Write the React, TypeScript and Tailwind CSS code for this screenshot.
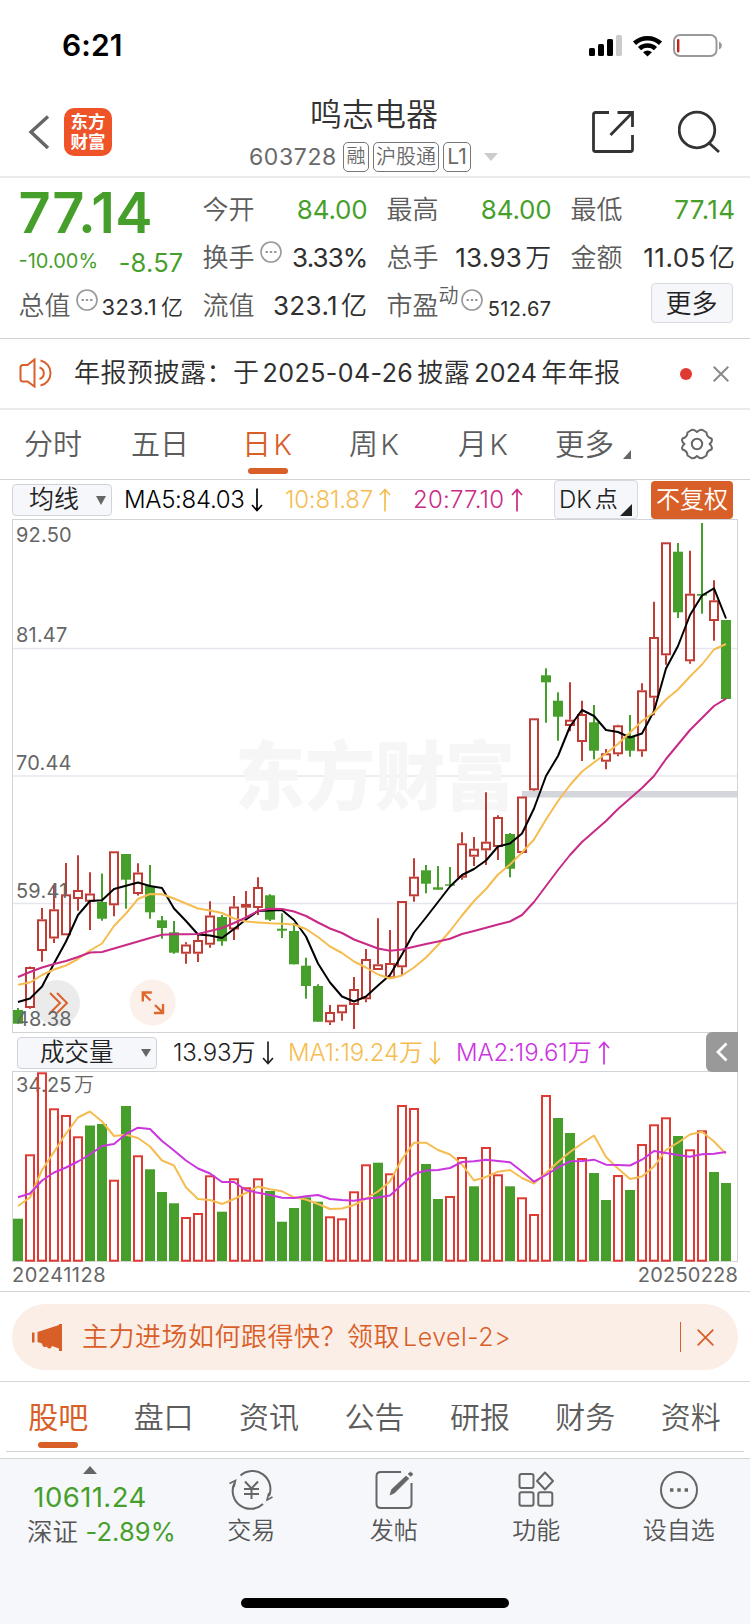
import type { ReactNode } from "react";
import clsx from "clsx";

const GREEN = "#479f2b";
const RED = "#c23c36";
const VOL_RED = "#e03a32";
const LINE = "#d2d3d7";

/** [up, high, bodyTop, bodyBottom, low, volumeUp, volumeTop] in page pixels, one entry per trading day. */
type Day = [number, number, number, number, number, number, number];

const DAYS: Day[] = [
  [0, 1008, 1010, 1023.7, 1023.7, 0, 1218.7],
  [1, 966.5, 967, 1008, 1008.7, 1, 1154.3],
  [1, 908, 919.3, 951, 961.7, 1, 1072.3],
  [1, 886, 909.3, 938.5, 943, 1, 1108.3],
  [1, 863, 894.3, 935.3, 935.3, 1, 1115],
  [1, 855.3, 890, 899, 910.7, 1, 1136.3],
  [1, 872.3, 893.5, 901.7, 930, 0, 1125.5],
  [0, 873.5, 902, 918.7, 920.7, 0, 1124],
  [1, 851.3, 851.3, 905.3, 916.3, 1, 1179.7],
  [0, 854, 854, 879.7, 908.7, 0, 1106],
  [1, 863.3, 872.5, 894, 895.5, 1, 1155.3],
  [0, 865, 886, 912.3, 918.7, 0, 1169.3],
  [0, 916, 920.3, 928, 938.7, 0, 1192],
  [0, 921, 932.3, 952.7, 953.7, 0, 1203.3],
  [1, 942.3, 944.5, 953.7, 963.7, 1, 1217],
  [1, 934, 940, 953.7, 962, 1, 1213],
  [1, 901.3, 915.5, 944.7, 947.7, 1, 1175.3],
  [0, 915, 917, 941.3, 945.7, 0, 1211.7],
  [1, 896, 906.5, 929.5, 940, 1, 1178.3],
  [1, 891, 904, 907.7, 918, 1, 1187.3],
  [1, 877.3, 887, 908, 915, 1, 1178.3],
  [0, 894.3, 895.3, 919.7, 921, 0, 1191],
  [0, 913.3, 928.7, 930.7, 938, 0, 1221.7],
  [0, 923, 931, 964.3, 964.3, 0, 1208],
  [0, 957.7, 965.7, 986, 998.7, 0, 1197.3],
  [0, 984.3, 986, 1021.7, 1021.7, 0, 1201.7],
  [1, 1005, 1012, 1022.3, 1025, 1, 1216.3],
  [1, 1004.7, 1004.7, 1013.3, 1020.7, 1, 1218.3],
  [1, 977, 989, 1005, 1029, 1, 1191.3],
  [1, 949, 959, 999.3, 1002.3, 1, 1164.3],
  [1, 918.3, 964.3, 970, 970, 0, 1162.7],
  [1, 930, 963, 978.3, 978.3, 1, 1173.3],
  [1, 901, 901, 967.3, 975, 1, 1105],
  [1, 858.3, 876.7, 896.3, 901.7, 1, 1108],
  [0, 865, 870.3, 883.7, 893.3, 0, 1164],
  [0, 866, 887.3, 889.7, 889.7, 0, 1199],
  [0, 867, 884.3, 885.7, 886.7, 1, 1196],
  [1, 832.3, 843.3, 877.7, 879.7, 1, 1157],
  [1, 837, 848.7, 856.7, 866, 0, 1186.3],
  [1, 792.3, 841.7, 850.3, 865, 1, 1147],
  [1, 815.3, 817, 847, 860, 1, 1174.3],
  [0, 833, 834, 868.7, 877.3, 0, 1186.3],
  [1, 796.5, 796.5, 853, 854, 1, 1197.3],
  [1, 718.3, 718.3, 790.3, 791, 1, 1214],
  [0, 668.3, 675.3, 682.3, 722.7, 1, 1095],
  [0, 692.3, 700.7, 716.7, 740.7, 0, 1118],
  [1, 682.3, 719.7, 726, 731.3, 0, 1133],
  [1, 700.7, 714, 742, 761, 1, 1158],
  [0, 705, 722.3, 750.7, 759.3, 0, 1173],
  [1, 749, 753.3, 761.7, 769.3, 0, 1200],
  [1, 724.7, 725.3, 754.3, 756.3, 1, 1175],
  [0, 715, 736.7, 750.7, 756.7, 0, 1190],
  [1, 683.3, 690.3, 751.3, 756.7, 1, 1144],
  [1, 601.7, 637, 697.7, 715.3, 1, 1124.3],
  [1, 542.3, 542.3, 655.3, 664.7, 1, 1117.3],
  [0, 543, 551.7, 612.3, 618, 0, 1136],
  [1, 550.7, 593.7, 661.3, 663.7, 1, 1149.3],
  [0, 523, 594, 595.7, 613.7, 1, 1130.3],
  [1, 580.3, 600.3, 621, 640.7, 0, 1172],
  [0, 620, 620, 699, 699, 0, 1183],
];

const MA5 = [
  1002, 998.5, 986.5, 963.5, 941.5, 915, 901, 900.3, 889, 885.7, 882.5, 886, 888, 908.5, 921, 934.5, 935.5, 938,
  929, 919.5, 911, 910.5, 910, 920, 936.5, 963.5, 982.5, 996.5, 1001.5, 996.5, 985.5, 975, 954.5, 932.5, 917.5,
  902, 886.5, 875, 869, 860.5, 846.5, 843.5, 833.5, 808.5, 776, 756, 726.5, 710, 716, 730, 732, 737.5, 733.5, 711,
  668.5, 646, 615, 595.5, 588.3, 618.5,
];
const MA10 = [
  984.7, 982.5, 975, 969.5, 965.5, 959, 950.5, 943.5, 926, 913.5, 899, 894, 894.3, 898.5, 903.5, 908.5, 910.5, 913,
  918.5, 921.5, 922.5, 923.3, 923.7, 924.5, 929, 937, 946.5, 953, 961.5, 967.5, 974.5, 978.5, 975.5, 967.5, 957.5,
  945, 931, 915.5, 901, 889, 874.5, 864.5, 852.5, 839.5, 819.5, 801, 785, 771.5, 762.5, 753.5, 744, 732.5, 721,
  712.5, 699.5, 689.5, 676.5, 664.5, 649.5, 644,
];
const MA20 = [
  977, 972, 967.5, 964, 961, 957, 952.5, 952, 948.5, 945, 941.5, 938, 934.7, 934.3, 934.3, 934, 931, 928, 923, 917.5,
  911, 908.7, 909, 911.5, 916, 922.5, 928.5, 933, 939.5, 944, 948.5, 950.7, 949.5, 946.7, 944, 941.5, 938.7, 934,
  931, 927.8, 924.5, 921.5, 915, 902, 886, 870, 855, 842, 831.5, 821, 809, 798.5, 788, 776, 759, 744.5, 730, 718,
  706, 698.7,
];
const VOL_MA1 = [
  1206, 1197.5, 1170, 1152, 1133.5, 1117.5, 1111.5, 1121.5, 1136, 1134.7, 1138, 1146.5, 1160.5, 1165.5, 1187.5, 1199,
  1200, 1204, 1199, 1193, 1186.5, 1189.3, 1191.3, 1197.3, 1199.5, 1204, 1209, 1208.5, 1205, 1198.5, 1191.5, 1181.5,
  1159, 1142.7, 1142.7, 1150, 1154.5, 1164.5, 1180.5, 1177, 1171.7, 1170, 1178, 1183.5, 1173, 1162, 1152, 1143.5,
  1135.5, 1157, 1168.5, 1179, 1176.5, 1166.5, 1150, 1142.5, 1134.5, 1131.7, 1141.5, 1153.7,
];
const VOL_MA2 = [
  1197.3, 1193.5, 1180.5, 1172.5, 1167.5, 1161.5, 1154.5, 1146, 1144, 1134, 1127.7, 1129, 1141, 1150.5, 1160.5,
  1168.5, 1173.5, 1182, 1182, 1190.3, 1192.7, 1195, 1197.7, 1198, 1196.3, 1195, 1199, 1200, 1200.7, 1198.7, 1197.5,
  1195.5, 1184.5, 1174, 1170.5, 1170, 1168, 1162, 1161.3, 1159.7, 1161, 1162.3, 1171.5, 1181.7, 1175, 1167.5, 1161.3,
  1161, 1159.7, 1164.7, 1165, 1165.5, 1159.7, 1151, 1153, 1155, 1156.7, 1154.3, 1153.7, 1152,
];

const xAt = (i: number) => 18 + i * 12;
const toPoints = (ys: number[]) => ys.map((y, i) => `${xAt(i)},${y}`).join(" ");

function Trend({ ys, color }: { ys: number[]; color: string }) {
  return <polyline points={toPoints(ys)} fill="none" stroke={color} strokeWidth="2" strokeLinejoin="round" />;
}

function PriceChart() {
  return (
    <svg width="750" height="514" viewBox="0 519 750 514" className="block shrink-0">
      <path d="M13 648.5H738M13 776H738M13 903.5H738" stroke="#e6e6ee" strokeWidth="1.4" />
      <text x="235" y="757" fontSize="70" fontWeight="900" fill="#f6f6f6" transform="translate(0 -6) scale(1 1.07)">
        东方财富
      </text>
      <rect x="522" y="791" width="216" height="6.5" fill="#d4d6db" />
      <rect x="12.5" y="519.5" width="725" height="513" fill="none" stroke={LINE} />
      <circle cx="57" cy="1003" r="23" fill="#ebebeb" />
      <circle cx="152.7" cy="1002.6" r="23" fill="#fcf0ea" />
      {DAYS.map(([up, high, top, bottom, low], i) => {
        const x = xAt(i);
        return up ? (
          <g key={i} stroke={RED} strokeWidth="2" fill="none">
            <path d={`M${x} ${high}V${top}M${x} ${bottom}V${low}`} />
            <rect x={x - 4} y={top + 1} width="8" height={Math.max(bottom - top - 2, 1)} />
          </g>
        ) : (
          <g key={i} fill={GREEN}>
            <rect x={x - 1} y={high} width="2" height={low - high} />
            <rect x={x - 5} y={top} width="10" height={bottom - top} />
          </g>
        );
      })}
      <Trend ys={MA5} color="#000" />
      <Trend ys={MA10} color="#f5bd51" />
      <Trend ys={MA20} color="#c92a86" />
      <path d="M50 993l10 10-10 10M57 993l10 10-10 10" fill="none" stroke="#d9622b" strokeWidth="2" />
      <g fill="none" stroke="#e0682f" strokeWidth="2.4">
        <path d="M142.800 1001.500V992.500H151.800M143 993L150.500 1000.500" />
        <path d="M163 1004V1013H154M162.800 1012.700L155 1005" />
      </g>
      <g fontSize="20" fill="#666" letterSpacing="0.2">
        <text x="16" y="542">92.50</text>
        <text x="16" y="642">81.47</text>
        <text x="16" y="770">70.44</text>
        <text x="16" y="898">59.41</text>
        <text x="16" y="1026">48.38</text>
      </g>
    </svg>
  );
}

function VolumeChart() {
  return (
    <svg width="750" height="191" viewBox="0 1071 750 191" className="block shrink-0">
      <rect x="12.5" y="1071.5" width="725" height="190" fill="none" stroke={LINE} />
      <g fontSize="20" fill="#666" letterSpacing="0.2">
        <text x="16" y="1092">34.25</text>
        <text x="74" y="1092" className="font-[350]">
          万
        </text>
      </g>
      {DAYS.map(([, , , , , up, top], i) =>
        up ? (
          <rect key={i} x={xAt(i) - 4} y={top + 1} width="8" height={1259.7 - top} fill="none" stroke={VOL_RED} strokeWidth="2" />
        ) : (
          <rect key={i} x={xAt(i) - 5} y={top} width="10" height={1261 - top} fill={GREEN} />
        ),
      )}
      <Trend ys={VOL_MA1} color="#f5bd51" />
      <Trend ys={VOL_MA2} color="#cb35df" />
    </svg>
  );
}

function Arrow({ down, className }: { down?: boolean; className?: string }) {
  return (
    <svg width="12" height="24" viewBox="0 0 12 24" className={clsx("shrink-0", className)} fill="none" stroke="currentColor" strokeWidth="1.7">
      <path d={down ? "M6 .5V22M1 17L6 22.500L11 17" : "M6 23.500V2M1 7L6 1.500L11 7"} />
    </svg>
  );
}

function More({ className }: { className?: string }) {
  return (
    <svg width="22" height="22" viewBox="0 0 22 22" className={clsx("shrink-0", className)}>
      <circle cx="11" cy="11" r="10" fill="none" stroke="#999" strokeWidth="1.6" />
      <path d="M5.500 11h2.400M9.800 11h2.400M14.100 11h2.400" stroke="#999" strokeWidth="2.200" />
    </svg>
  );
}

interface CellProps {
  label: string;
  value: string;
  unit?: string;
  valueClass?: string;
  children?: ReactNode;
}

function Cell({ label, value, unit, valueClass = "tracking-[0.3px] text-[#2f2f2f]", children }: CellProps) {
  return (
    <div className="flex h-12 items-center justify-between whitespace-nowrap">
      <span className="flex items-center text-[26px] font-[350] text-[#5c5c5c]">
        {label}
        {children}
      </span>
      <span className={clsx("flex text-[26px]", valueClass)}>
        {value}
        {unit && <span className="ml-[3px] font-[350]">{unit}</span>}
      </span>
    </div>
  );
}

function StatusBar() {
  return (
    <div className="flex h-[88px] shrink-0 items-center justify-between pr-[28px] pl-[62px]">
      <span className="mt-[2px] text-[30px] font-semibold tracking-[0.1px] text-black">6:21</span>
      <svg width="134" height="26" viewBox="588 31 134 26">
        <rect x="589" y="48" width="6" height="8" rx="1.5" />
        <rect x="598" y="44" width="6" height="12" rx="1.5" />
        <rect x="607" y="39" width="6" height="17" rx="1.5" />
        <rect x="616" y="35" width="6" height="21" rx="1.5" fill="#ccc" />
        <g fill="none" stroke="#000" strokeWidth="4.600">
          <path d="M634.500 43.300a19.300 19.300 0 0 1 26 0" />
          <path d="M639.500 48.600a12 12 0 0 1 16 0" />
        </g>
        <path d="M643 52.200a7 7 0 0 1 9 0L647.500 56.500Z" />
        <rect x="674" y="35" width="42.500" height="21" rx="6" fill="none" stroke="#999" strokeWidth="2" />
        <rect x="677" y="39" width="2.400" height="13.500" rx="1" fill="#c8201f" />
        <path d="M719 41.500q3 1.500 3 4t-3 4z" fill="#999" />
      </svg>
    </div>
  );
}

function NavBar() {
  return (
    <header className="flex h-[90px] shrink-0 items-start border-b-2 border-[#ebebeb]">
      <svg width="22" height="36" viewBox="0 0 22 36" className="mt-[26px] ml-[28px]" fill="none" stroke="#666" strokeWidth="3.400">
        <path d="M20 2.500L3 18L20 34" />
      </svg>
      <div className="mt-[20px] ml-[14px] flex size-12 flex-col items-center justify-center rounded-[10px] bg-[#ee5427] text-[17.5px] leading-[20px] font-bold text-white">
        <span>东方</span>
        <span>财富</span>
      </div>
      <div className="ml-[137px] flex w-[251px] flex-col">
        <h1 className="mt-[9px] ml-[61px] text-[32px] leading-[36px] font-[350] text-[#333]">鸣志电器</h1>
        <div className="mt-[9px] flex h-[30px] items-center text-[#6a6a6a]">
          <span className="w-[94px] text-[23px] tracking-[0.6px]">603728</span>
          <span className="flex h-[30px] w-[26px] items-center justify-center rounded-[5px] border border-[#777] text-[19px] font-[350]">融</span>
          <span className="ml-[4px] flex h-[30px] w-[66px] items-center justify-center rounded-[5px] border border-[#777] text-[20px] font-[350]">
            沪股通
          </span>
          <span className="ml-[4px] flex h-[30px] w-[28px] items-center justify-center rounded-[5px] border border-[#777] text-[21px]">
            L1
          </span>
          <svg width="14" height="8" viewBox="0 0 14 8" className="ml-[13px] shrink-0">
            <path d="M0 0H14L7 8Z" fill="#ccc" />
          </svg>
        </div>
      </div>
      <svg width="44" height="44" viewBox="0 0 44 44" className="mt-[22px] ml-[91px]" fill="none" stroke="#333" strokeWidth="2.800">
        <path d="M18 2.500H4.500Q2.500 2.500 2.500 4.500V39.500Q2.500 41.500 4.500 41.500H39.500Q41.500 41.500 41.500 39.500V25M26.500 2.500H41.500V17M41 3L19.500 25" />
      </svg>
      <svg width="44" height="44" viewBox="0 0 44 44" className="mt-[22px] ml-[43px]" fill="none" stroke="#333" strokeWidth="2.800">
        <circle cx="19" cy="20" r="17.800" />
        <path d="M31 33L41 42" />
      </svg>
    </header>
  );
}

function Quote() {
  return (
    <section className="grid h-[161px] shrink-0 grid-cols-[165px_165px_165px_165px] gap-x-[19px] border-b border-[#d0d0d0] pt-[7px] pl-[18.5px]">
      <div>
        <div className="flex h-[54px] items-center pt-[2px] text-[56px] leading-none font-semibold tracking-[0.4px] text-[#479f2b]">77.14</div>
        <div className="flex h-[42px] items-center justify-between text-[#479f2b]">
          <span className="mt-px text-[20px]">-10.00%</span>
          <span className="mt-[7px] text-[25.5px] tracking-[0.2px]">-8.57</span>
        </div>
        <div className="flex h-12 items-center whitespace-nowrap">
          <span className="text-[26px] font-[350] text-[#5c5c5c]">总值</span>
          <More className="mb-[10px] ml-[5px]" />
          <span className="mt-[5px] ml-auto flex text-[22px] tracking-[0.4px] text-[#2f2f2f]">
            323.1<span className="ml-[4px] font-[350]">亿</span>
          </span>
        </div>
      </div>
      <div>
        <Cell label="今开" value="84.00" valueClass="tracking-[-0.2px] text-[#479f2b]" />
        <Cell label="换手" value="3.33%" valueClass="tracking-[-0.9px] text-[#2f2f2f]">
          <More className="mb-[10px] ml-[5px]" />
        </Cell>
        <Cell label="流值" value="323.1" unit="亿" valueClass="tracking-[0.4px] text-[#2f2f2f]" />
      </div>
      <div>
        <Cell label="最高" value="84.00" valueClass="tracking-[-0.2px] text-[#479f2b]" />
        <Cell label="总手" value="13.93" unit="万" />
        <div className="flex h-12 items-center whitespace-nowrap">
          <span className="text-[26px] font-[350] text-[#5c5c5c]">市盈</span>
          <span className="mb-[18px] text-[20px] font-[350] text-[#5c5c5c]">动</span>
          <More className="mb-[10px] ml-[2px]" />
          <span className="mt-[8px] ml-auto text-[20px] tracking-[0.4px] text-[#2f2f2f]">512.67</span>
        </div>
      </div>
      <div>
        <Cell label="最低" value="77.14" valueClass="tracking-[0.4px] text-[#479f2b]" />
        <Cell label="金额" value="11.05" unit="亿" valueClass="tracking-[0.5px] text-[#2f2f2f]" />
        <button className="mt-[2px] mr-[3px] ml-auto flex h-[40px] w-[82px] items-center justify-center rounded-[4px] border border-[#d8dade] bg-[#f6f7fa] text-[26px] font-[350] text-[#222]">
          更多
        </button>
      </div>
    </section>
  );
}

function Notice() {
  return (
    <section className="flex h-[71px] shrink-0 items-center border-b-2 border-[#ebebeb] pl-[19px]">
      <svg width="36" height="30" viewBox="0 0 36 30" className="mb-px" fill="none" stroke="#d9602a" strokeWidth="2">
        <path d="M15.500 1.500V28.500L8.500 23.500H4Q1.500 23.500 1.500 21V9.500Q1.500 7 4 7H8.500Z" />
        <path d="M20.500 9.500a6 6 0 0 1 0 11.500M21.500 2.500a12.800 12.800 0 0 1 0 25" />
      </svg>
      <span className="mb-px ml-[19px] flex w-[561px] items-baseline text-[26px] font-[350] tracking-[0.5px] whitespace-nowrap text-[#2f2f2f]">
        年报预披露：于
        <span className="ml-[3px] text-[25px] font-normal tracking-[0.45px]">2025-04-26</span>
        <span className="ml-[4px]">披露</span>
        <span className="ml-[4px] text-[25px] font-normal tracking-[0.2px]">2024</span>
        <span className="ml-[4px]">年年报</span>
      </span>
      <span className="ml-[45px] size-3 rounded-full bg-[#e03a32]" />
      <svg width="16" height="16" viewBox="0 0 16 16" className="ml-[21px]" stroke="#8a8a8a" strokeWidth="2">
        <path d="M.7.7L15.300 15.300M15.300.7L.7 15.300" />
      </svg>
    </section>
  );
}

function KTab({ unit, className }: { unit: string; className?: string }) {
  return (
    <span className={clsx("flex items-baseline", className)}>
      {unit}
      <span className="ml-[2.5px] text-[28.5px]">K</span>
    </span>
  );
}

function PeriodTabs() {
  return (
    <nav className="relative flex h-[70px] shrink-0 items-center border-b border-[#d2d3d7] pl-[24px] text-[29px] font-[350] whitespace-nowrap text-[#5c5c5c]">
      <span className="w-[107px]">分时</span>
      <span className="w-[111px]">五日</span>
      <KTab unit="日" className="w-[107px] text-[#d95f28]" />
      <KTab unit="周" className="w-[109px]" />
      <KTab unit="月" className="w-[97px]" />
      <span className="w-[68px] text-[29.5px]">更多</span>
      <svg width="8" height="9" viewBox="0 0 8 9" className="mt-[20px]">
        <path d="M8 0V9H0Z" fill="#666" />
      </svg>
      <svg width="34" height="32" viewBox="0 0 34 32" className="mb-[2px] ml-[49px]" fill="none" stroke="#666" strokeWidth="2">
        <path d="M11.500 2Q14 1 17 4Q20 1 22.500 2L26.500 4.500Q26.500 9 31.500 10.500Q33 13.500 29.500 16Q33 18.500 31.500 21.500Q26.500 23 26.500 27.500L22.500 30Q20 31 17 28Q14 31 11.500 30L7.500 27.500Q7.500 23 2.500 21.500Q1 18.500 4.500 16Q1 13.500 2.500 10.500Q7.500 9 7.500 4.500Z" strokeLinejoin="round" />
        <circle cx="17" cy="16" r="5.200" />
      </svg>
      <span className="absolute top-[58px] left-[248px] h-[6px] w-[40px] rounded-full bg-[#d95f28]" />
    </nav>
  );
}

function AverageBar() {
  return (
    <div className="flex h-[39px] shrink-0 items-center pl-3 text-[24px] font-[350] whitespace-nowrap">
      <span className="mt-px flex h-[32px] w-[100px] items-center rounded-[4px] border border-[#d0d3dc] bg-[#f6f7fa] pl-4 text-[25px] text-[#222]">
        均线
        <svg width="10" height="9" viewBox="0 0 10 9" className="mr-[5px] ml-auto">
          <path d="M0 0H10L5 9Z" fill="#666" />
        </svg>
      </span>
      <span className="mt-px ml-[12px] w-[127px] tracking-[-0.3px] text-black">MA5:84.03</span>
      <Arrow down />
      <span className="mt-px ml-[22px] w-[94px] tracking-[-0.2px] text-[#f5bd51]">10:81.87</span>
      <Arrow className="text-[#f5bd51]" />
      <span className="mt-px ml-[22px] w-[98px] tracking-[0.2px] text-[#c92a86]">20:77.10</span>
      <Arrow className="text-[#c92a86]" />
      <span className="relative ml-[31px] flex h-[39px] w-[84px] items-center rounded-[4px] border border-[#d8dae2] bg-[#f6f7fa] pl-[4px] text-[24px] text-[#222]">
        DK<span className="ml-[3px] text-[23px]">点</span>
        <svg width="12" height="12" viewBox="0 0 12 12" className="absolute right-[5px] bottom-[2px]">
          <path d="M12 0V12H0Z" fill="#222" />
        </svg>
      </span>
      <span className="ml-[13px] flex h-[38px] w-[82px] items-center justify-center rounded-[4px] bg-[#d95f28] text-[24px] text-white">不复权</span>
    </div>
  );
}

function VolumeBar() {
  return (
    <div className="relative flex h-[38px] shrink-0 items-center pl-[17px] text-[24px] font-[350] whitespace-nowrap">
      <span className="mt-px flex h-[32px] w-[140px] items-center rounded-[4px] border border-[#d0d3dc] bg-[#f6f7fa] pl-[22px] text-[24.5px] text-[#222]">
        成交量
        <svg width="10" height="8" viewBox="0 0 10 8" className="mr-[5px] ml-auto">
          <path d="M0 0H10L5 8Z" fill="#666" />
        </svg>
      </span>
      <span className="mt-[2px] ml-[16px] w-[89px] tracking-[-0.1px] text-[#222]">13.93万</span>
      <Arrow down className="mt-px text-[#222]" />
      <span className="mt-[2px] ml-[14px] w-[141px] tracking-[-0.2px] text-[#f5bd51]">MA1:19.24万</span>
      <Arrow down className="mt-px text-[#f5bd51]" />
      <span className="mt-[2px] ml-[15px] w-[142px] tracking-[-0.1px] text-[#cb35df]">MA2:19.61万</span>
      <Arrow className="mt-px text-[#cb35df]" />
      <span className="absolute -top-px right-[12px] flex h-[40px] w-[32px] items-center justify-center rounded-l-[6px] bg-[#999]">
        <svg width="12" height="20" viewBox="0 0 12 20" fill="none" stroke="#fff" strokeWidth="2.800">
          <path d="M10.500 1.500L2 10L10.500 18.500" />
        </svg>
      </span>
    </div>
  );
}

function Promo() {
  return (
    <section className="h-[91px] shrink-0 border-y border-[#d6d6d6] px-3 pt-3">
      <div className="flex h-[66px] items-center rounded-full bg-[#fbeee7] pl-5 text-[#d95f28]">
        <svg width="30" height="27" viewBox="0 0 30 27" fill="currentColor">
          <path d="M0 8.500h2.500v10H0zM5.500 8L27 1V0h3v27h-3v-2.500L20 22q-1 3-3 2.500t-2-2q-3 1.500-4.500-1L10 19.500 5.500 18Z" />
        </svg>
        <span className="ml-[20px] flex w-[598px] items-baseline text-[26px] font-[350] tracking-[0.5px] whitespace-nowrap">
          主力进场如何跟得快？领取
          <span className="ml-[3px] text-[25px] tracking-[0.5px]">Level-2&gt;</span>
        </span>
        <span className="h-[30px] w-px bg-[#d95f28]" />
        <svg width="17" height="17" viewBox="0 0 17 17" className="ml-4" stroke="currentColor" strokeWidth="1.800">
          <path d="M.7.7L16.300 16.300M16.300.7L.7 16.300" />
        </svg>
      </div>
    </section>
  );
}

const SECTIONS = ["股吧", "盘口", "资讯", "公告", "研报", "财务", "资料"];

function SectionTabs() {
  return (
    <nav className="mx-1.5 grid h-[70px] shrink-0 grid-cols-7 border-b border-[#d2d3d7] text-[30px] font-[350] text-[#5c5c5c]">
      {SECTIONS.map((name, i) => (
        <span key={name} className={clsx("relative flex items-center justify-center pt-[2px] pr-px", i === 0 && "font-normal text-[#d95f28]")}>
          {name}
          {i === 0 && <span className="absolute bottom-[3px] h-[6px] w-[40px] rounded-full bg-[#d95f28]" />}
        </span>
      ))}
    </nav>
  );
}

function Action({ label, children }: { label: string; children: ReactNode }) {
  return (
    <div className="flex w-[142.6px] flex-col items-center pt-[10px] text-[24px] font-[350] text-[#555]">
      <svg width="44" height="42" viewBox="0 0 44 42" fill="none" stroke="#666" strokeWidth="2">
        {children}
      </svg>
      <span className="mt-[2px] leading-[36px]">{label}</span>
    </div>
  );
}

function BottomBar() {
  return (
    <footer className="mt-[6px] flex h-[166px] shrink-0 flex-col items-center border-t border-[#d2d3d7] bg-[#f6f7fa]">
      <div className="flex h-[139px] w-full">
        <div className="flex w-[180px] flex-col items-center pt-[7px]">
          <svg width="14" height="8" viewBox="0 0 14 8">
            <path d="M7 0L14 8H0Z" fill="#666" />
          </svg>
          <span className="mt-[5px] text-[27.5px] leading-[36px] tracking-[0.4px] text-[#479f2b]">10611.24</span>
          <span className="ml-[23px] text-[25.5px] leading-[34px] tracking-[0.1px] whitespace-nowrap text-[#479f2b]">
            <span className="font-[350] text-[#555]">深证</span> -2.89%
          </span>
        </div>
        <Action label="交易">
          <path d="M11.500 6.500A18 18 0 0 1 40 27M34 35A18 18 0 0 1 5.500 14" />
          <path d="M.5 14.500L6.500 11.500L5 18M43.500 28L38 31L39.800 24" strokeWidth="1.600" />
          <path d="M16 12.500L22.500 19.500L29 12.500M22.500 19.500V30M15 20H30M15 25H30" />
        </Action>
        <Action label="发帖">
          <path d="M29 3H9Q4.500 3 4.500 7V35Q4.500 39 9 39H35Q39.500 39 39.500 35V14" />
          <path d="M18 26L19.500 20.500L34 7L37 9.500L22.500 24ZM36 5l3 2.500 2-2.500-2.500-2z" fill="#666" strokeWidth=".6" />
        </Action>
        <Action label="功能">
          <rect x="5.500" y="5" width="14" height="14" rx="2" />
          <rect x="5.500" y="23.300" width="14" height="13.500" rx="2" />
          <rect x="24.300" y="23.300" width="14" height="13.500" rx="2" />
          <path d="M31 3.500L39 12L31 20.500L23 12Z" strokeLinejoin="round" />
        </Action>
        <Action label="设自选">
          <circle cx="22" cy="21" r="18" />
          <path d="M13 21h3.400M20.300 21h3.400M27.600 21h3.400" strokeWidth="3.400" />
        </Action>
      </div>
      <div className="h-[10px] w-[268px] rounded-full bg-black" />
    </footer>
  );
}

export default function App() {
  return (
    <div className="flex h-[1624px] w-[750px] flex-col overflow-hidden bg-white font-['Inter','Noto_Sans_CJK_SC',sans-serif]">
      <StatusBar />
      <NavBar />
      <Quote />
      <Notice />
      <PeriodTabs />
      <AverageBar />
      <PriceChart />
      <VolumeBar />
      <VolumeChart />
      <div className="flex h-[29px] shrink-0 items-center justify-between pr-[12px] pb-[3px] pl-[12px] text-[20px] text-[#666]">
        <span className="tracking-[0.5px]">20241128</span>
        <span className="tracking-[0.2px]">20250228</span>
      </div>
      <Promo />
      <SectionTabs />
      <BottomBar />
    </div>
  );
}
